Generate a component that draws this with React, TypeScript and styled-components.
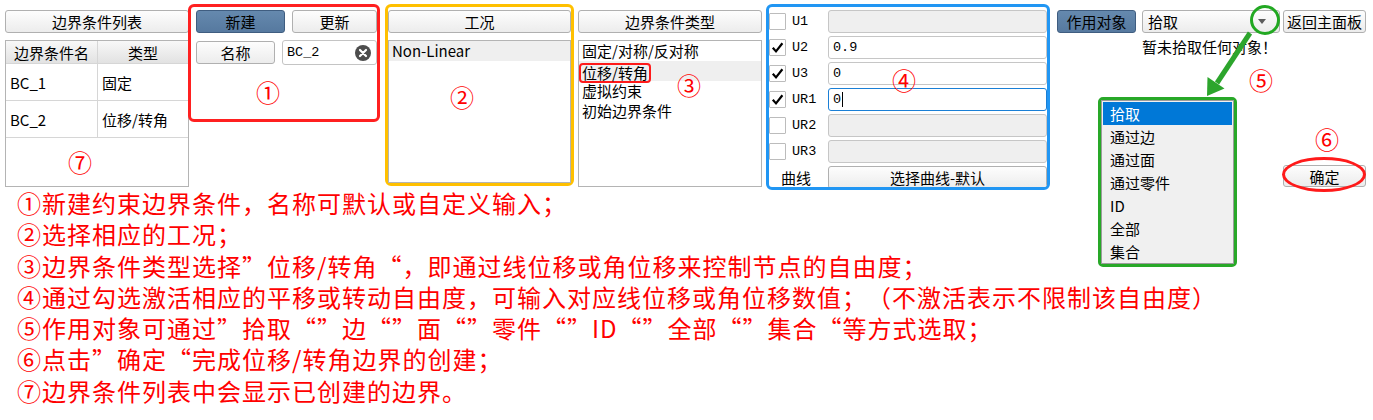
import React from "react";
import styled, { createGlobalStyle } from "styled-components";

const GlobalStyle = createGlobalStyle`
  html, body {
    margin: 0;
    padding: 0;
    background: #ffffff;
  }
  body {
    font-family: "Noto Sans CJK SC", "Noto Sans", sans-serif;
    font-size: 15px;
    color: #000000;
    text-spacing-trim: space-all;
  }
  * {
    box-sizing: border-box;
  }
`;

const dofRows = [
  { name: "U1", checked: false, value: "" },
  { name: "U2", checked: true, value: "0.9" },
  { name: "U3", checked: true, value: "0" },
  { name: "UR1", checked: true, value: "0", focused: true },
  { name: "UR2", checked: false, value: "" },
  { name: "UR3", checked: false, value: "" },
];

const bcTypes = ["固定/对称/反对称", "位移/转角", "虚拟约束", "初始边界条件"];

const targetOptions = ["拾取", "通过边", "通过面", "通过零件", "ID", "全部", "集合"];

const notes = [
  "①新建约束边界条件，名称可默认或自定义输入；",
  "②选择相应的工况；",
  "③边界条件类型选择”位移/转角“，即通过线位移或角位移来控制节点的自由度；",
  "④通过勾选激活相应的平移或转动自由度，可输入对应线位移或角位移数值；（不激活表示不限制该自由度）",
  "⑤作用对象可通过”拾取“”边“”面“”零件“”ID“”全部“”集合“等方式选取；",
  "⑥点击”确定“完成位移/转角边界的创建；",
  "⑦边界条件列表中会显示已创建的边界。",
];

export default function App() {
  return (
    <Page>
      <GlobalStyle />
      <TopRow>
        <Column $width={184}>
          <Button>边界条件列表</Button>
          <Table>
            <TableRow $header>
              <Cell $header>边界条件名</Cell>
              <Cell $header>类型</Cell>
            </TableRow>
            <TableRow>
              <Cell>BC_1</Cell>
              <Cell>固定</Cell>
            </TableRow>
            <TableRow>
              <Cell>BC_2</Cell>
              <Cell>位移/转角</Cell>
            </TableRow>
            <Marker $x={74} $y={121}>⑦</Marker>
          </Table>
        </Column>

        <NameFrame $color="#ff2020" $width={192} $height={118} $offset={-1}>
          <PairRow $first={89}>
            <Button $active>新建</Button>
            <Button>更新</Button>
          </PairRow>
          <PairRow $first={79}>
            <Button>名称</Button>
            <NameInput>
              <span>BC_2</span>
              <ClearIcon viewBox="0 0 16 16">
                <circle cx="8" cy="8" r="8" fill="#4d4d4d" />
                <path d="M5 5 L11 11 M11 5 L5 11" stroke="#ffffff" strokeWidth="2.2" strokeLinecap="round" />
              </ClearIcon>
            </NameInput>
          </PairRow>
          <Marker $x={77} $y={85}>①</Marker>
        </NameFrame>

        <Frame $color="#ffc000" $width={189} $height={182} $offset={5}>
          <Button>工况</Button>
          <ListBox $height={143}>
            <ListItem $selected>Non-Linear</ListItem>
          </ListBox>
          <Marker $x={74} $y={90}>②</Marker>
        </Frame>

        <Column $width={184} $offset={4}>
          <Button>边界条件类型</Button>
          <ListBox $height={147}>
            {bcTypes.map((t) => (
              <ListItem key={t} $selected={t === "位移/转角"}>
                {t === "位移/转角" ? <Mark>{t}</Mark> : t}
              </ListItem>
            ))}
          </ListBox>
          <Marker $x={111} $y={81}>③</Marker>
        </Column>

        <DofFrame $color="#2196f3" $width={284} $height={186} $offset={4}>
          {dofRows.map((r) => (
            <DofRow key={r.name}>
              <CheckCell>
                <CheckBox>
                  {r.checked && (
                    <svg width="13" height="13" viewBox="0 0 13 13">
                      <path d="M1.8 6.8 L5 10.4 L11.4 2.2" fill="none" stroke="#000" strokeWidth="2.2" />
                    </svg>
                  )}
                </CheckBox>
                <DofLabel>{r.name}</DofLabel>
              </CheckCell>
              <Field $disabled={!r.checked} $focused={r.focused}>
                {r.value}
                {r.focused && <Caret />}
              </Field>
            </DofRow>
          ))}
          <DofRow>
            <CurveLabel>曲线</CurveLabel>
            <Button>选择曲线-默认</Button>
          </DofRow>
          <Marker $x={135} $y={73}>④</Marker>
        </DofFrame>

        <ActionPanel>
          <ActionBar>
            <Button $active $width={79}>作用对象</Button>
            <Combo>
              <span>拾取</span>
              <ComboArrow />
            </Combo>
            <Button $width={83}>返回主面板</Button>
          </ActionBar>
          <Status>暂未拾取任何对象！</Status>
          <ConfirmButton>确定</ConfirmButton>

          <RingMark />
          <Pointer viewBox="0 0 309 186">
            <line x1="193" y1="29" x2="160" y2="79" stroke="#2ca52c" strokeWidth="5" />
            <polygon points="150,92 167.5,84.5 150.5,73" fill="#2ca52c" />
          </Pointer>
          <Marker $x={204} $y={76}>⑤</Marker>

          <Popup>
            <PopupList>
              {targetOptions.map((o, i) => (
                <PopupItem key={o} $selected={i === 0}>{o}</PopupItem>
              ))}
            </PopupList>
          </Popup>

          <Marker $x={270} $y={135}>⑥</Marker>
          <EllipseMark />
        </ActionPanel>
      </TopRow>

      <Notes>
        {notes.map((n) => (
          <NoteLine key={n}>{n}</NoteLine>
        ))}
      </Notes>
    </Page>
  );
}

const Page = styled.div`
  width: 1373px;
  height: 420px;
  overflow: hidden;
`;

const TopRow = styled.div`
  display: flex;
  align-items: flex-start;
  padding: 4px 0 0 5px;
  height: 190px;
`;

const Column = styled.div<{ $width: number; $offset?: number }>`
  position: relative;
  flex-shrink: 0;
  display: flex;
  flex-direction: column;
  gap: 7px;
  width: ${(p) => p.$width}px;
  margin-left: ${(p) => p.$offset ?? 0}px;
  padding-top: 6px;
`;

const Frame = styled.div<{ $color: string; $width: number; $height: number; $offset: number }>`
  position: relative;
  flex-shrink: 0;
  display: flex;
  flex-direction: column;
  gap: 7px;
  width: ${(p) => p.$width}px;
  height: ${(p) => p.$height}px;
  margin-left: ${(p) => p.$offset}px;
  padding-top: 3px;
  border: 3px solid ${(p) => p.$color};
  border-radius: 6px;
`;

const NameFrame = styled(Frame)`
  padding-left: 5px;
`;

const DofFrame = styled(Frame)`
  gap: 3px;
  overflow: hidden;
`;

const Button = styled.div<{ $active?: boolean; $width?: number }>`
  flex-shrink: 0;
  display: flex;
  align-items: center;
  justify-content: center;
  width: ${(p) => (p.$width ? `${p.$width}px` : "100%")};
  height: 23px;
  border: 1px solid ${(p) => (p.$active ? "#3f5d80" : "#b0b0b0")};
  border-radius: 3px;
  background: ${(p) =>
    p.$active ? "linear-gradient(#6589ae, #56799f)" : "linear-gradient(#fdfdfd, #ececec)"};
  font-size: 15px;
  line-height: 1;
  white-space: nowrap;
`;

const PairRow = styled.div<{ $first: number }>`
  display: grid;
  grid-template-columns: ${(p) => p.$first}px 1fr;
  column-gap: 7px;
  align-items: center;
`;

const NameInput = styled.div`
  display: flex;
  align-items: center;
  justify-content: space-between;
  height: 25px;
  padding: 0 5px 0 4px;
  border: 1px solid #c4c4c4;
  border-radius: 3px;
  background: #ffffff;
  font-family: "Liberation Mono", monospace;
  font-size: 13.5px;
`;

const ClearIcon = styled.svg`
  width: 16px;
  height: 16px;
`;

const Table = styled.div`
  position: relative;
  height: 147px;
  border: 1px solid #b4b4b4;
  background: #ffffff;
`;

const TableRow = styled.div<{ $header?: boolean }>`
  display: grid;
  grid-template-columns: 91px 1fr;
  height: ${(p) => (p.$header ? 23 : 37)}px;
  border-bottom: 1px solid #d6d6d6;
  background: ${(p) => (p.$header ? "linear-gradient(#f8f8f8, #e2e2e2)" : "#ffffff")};
`;

const Cell = styled.div<{ $header?: boolean }>`
  display: flex;
  align-items: center;
  justify-content: ${(p) => (p.$header ? "center" : "flex-start")};
  padding-left: ${(p) => (p.$header ? 0 : 4)}px;
  white-space: nowrap;

  & + & {
    border-left: 1px solid #d6d6d6;
  }
`;

const ListBox = styled.div<{ $height: number }>`
  height: ${(p) => p.$height}px;
  border: 1px solid #b4b4b4;
  background: #ffffff;
`;

const ListItem = styled.div<{ $selected?: boolean }>`
  height: 20px;
  line-height: 20px;
  padding-left: 3px;
  background: ${(p) => (p.$selected ? "#efefef" : "transparent")};
  white-space: nowrap;
`;

const Mark = styled.span`
  display: inline-block;
  margin: 0 -3px;
  padding: 0 1px;
  border: 2.5px solid #ff1a1a;
  border-radius: 4px;
  line-height: 16px;
  vertical-align: middle;
`;

const DofRow = styled.div`
  flex-shrink: 0;
  display: grid;
  grid-template-columns: 59px 1fr;
  align-items: center;
  height: 23px;
`;

const CheckCell = styled.div`
  display: flex;
  align-items: center;
  gap: 6px;
`;

const CheckBox = styled.div`
  display: flex;
  align-items: center;
  justify-content: center;
  width: 17px;
  height: 17px;
  border: 1px solid #bcbcbc;
  border-radius: 1px;
  background: #ffffff;
`;

const DofLabel = styled.span`
  font-family: "Liberation Mono", monospace;
  font-size: 13.5px;
`;

const Field = styled.div<{ $disabled?: boolean; $focused?: boolean }>`
  display: flex;
  align-items: center;
  height: 23px;
  padding-left: 4px;
  border: 1px solid ${(p) => (p.$focused ? "#1a7fd6" : "#c6c6c6")};
  border-radius: 3px;
  background: ${(p) => (p.$disabled ? "#efefef" : "#ffffff")};
  font-family: "Liberation Mono", monospace;
  font-size: 13.5px;
`;

const Caret = styled.span`
  width: 1px;
  height: 15px;
  margin-left: 1px;
  background: #000000;
`;

const CurveLabel = styled.span`
  padding-left: 12px;
  font-size: 15px;
`;

const ActionPanel = styled.div`
  position: relative;
  flex-shrink: 0;
  display: flex;
  flex-direction: column;
  width: 309px;
  height: 186px;
  margin-left: 7px;
  padding: 6px 0 3px;
`;

const ActionBar = styled.div`
  display: flex;
  align-items: center;
`;

const Combo = styled.div`
  display: flex;
  align-items: center;
  justify-content: space-between;
  width: 138px;
  height: 23px;
  margin: 0 3px 0 6px;
  padding: 0 13px 0 5px;
  border: 1px solid #b0b0b0;
  border-radius: 3px;
  background: linear-gradient(#fdfdfd, #ececec);
`;

const ComboArrow = styled.span`
  width: 0;
  height: 0;
  border-left: 4px solid transparent;
  border-right: 4px solid transparent;
  border-top: 5px solid #5c5c5c;
`;

const Status = styled.div`
  margin-top: 6px;
  padding-left: 85px;
  font-size: 15px;
  line-height: 16px;
  white-space: nowrap;
`;

const ConfirmButton = styled(Button)`
  align-self: flex-end;
  width: 83px;
  height: 22px;
  margin-top: auto;
`;

const RingMark = styled.div`
  position: absolute;
  left: 193px;
  top: 1px;
  width: 30px;
  height: 30px;
  border: 3px solid #22a822;
  border-radius: 50%;
`;

const Pointer = styled.svg`
  position: absolute;
  left: 0;
  top: 0;
  width: 309px;
  height: 186px;
  pointer-events: none;
`;

const Popup = styled.div`
  position: absolute;
  left: 41px;
  top: 93px;
  width: 139px;
  height: 170px;
  border: 3px solid #28a828;
  border-radius: 5px;
  background: #ffffff;
`;

const PopupList = styled.div`
  height: 100%;
  padding: 1px;
  border: 1px solid #9c9c9c;
  background: #f0f0f0;
`;

const PopupItem = styled.div<{ $selected?: boolean }>`
  height: 23px;
  line-height: 23px;
  padding-left: 7px;
  background: ${(p) => (p.$selected ? "#0078d7" : "transparent")};
  color: ${(p) => (p.$selected ? "#ffffff" : "#000000")};
  font-size: 15px;
`;

const EllipseMark = styled.div`
  position: absolute;
  left: 225px;
  top: 153px;
  width: 84px;
  height: 35px;
  border: 3px solid #ff1a1a;
  border-radius: 50%;
`;

const Marker = styled.span<{ $x: number; $y: number }>`
  position: absolute;
  left: ${(p) => p.$x}px;
  top: ${(p) => p.$y}px;
  transform: translate(-50%, -50%);
  color: #ff0000;
  font-size: 24px;
  line-height: 1;
`;

const Notes = styled.div`
  margin-top: -3px;
  padding-left: 17px;
  color: #ff0000;
  font-size: 24px;
  line-height: 31.3px;
  letter-spacing: 1px;
  white-space: nowrap;
`;

const NoteLine = styled.div``;
